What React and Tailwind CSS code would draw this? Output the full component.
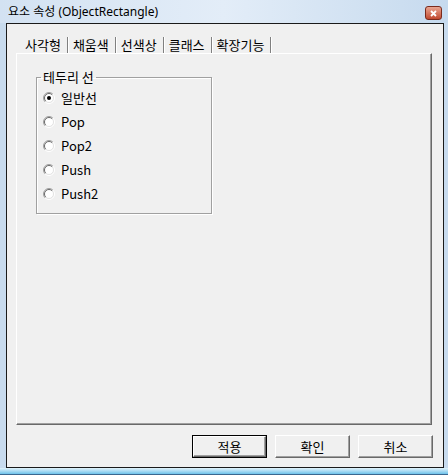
import React from 'react'

const tabs = ['사각형', '채움색', '선색상', '클래스', '확장기능']
const options = ['일반선', 'Pop', 'Pop2', 'Push', 'Push2']

function Radio({ checked }) {
  return (
    <svg width="12" height="12" viewBox="0 0 12 12" className="shrink-0">
      <circle cx="6" cy="6" r="4.5" fill="#ffffff" />
      <path d="M 2.1 9.9 A 5.5 5.5 0 0 1 9.9 2.1" fill="none" stroke="#a0a0a0" strokeWidth="1" />
      <path d="M 2.8 9.2 A 4.5 4.5 0 0 1 9.2 2.8" fill="none" stroke="#696969" strokeWidth="1" />
      <path d="M 9.9 2.1 A 5.5 5.5 0 0 1 2.1 9.9" fill="none" stroke="#ffffff" strokeWidth="1" />
      <path d="M 9.2 2.8 A 4.5 4.5 0 0 1 2.8 9.2" fill="none" stroke="#e3e3e3" strokeWidth="1" />
      {checked && <circle cx="6" cy="6" r="2" fill="#000000" />}
    </svg>
  )
}

function Button({ children, isDefault }) {
  return (
    <div className={'w-[75px] h-[23px] flex bg-[#f0f0f0] ' + (isDefault ? 'border border-black' : '')}>
      <div className="flex-1 flex items-center justify-center border border-t-white border-l-white border-r-[#696969] border-b-[#696969] shadow-[inset_-1px_-1px_0_#a0a0a0]">
        {children}
      </div>
    </div>
  )
}

export default function App() {
  return (
    <div className="w-[448px] h-[475px] flex flex-col bg-[#c8dbee] font-['Noto_Sans_CJK_KR',sans-serif] text-[13px] text-black overflow-hidden">
      {/* title bar */}
      <div className="h-[23px] flex items-center pl-[8px] pr-[6px] bg-gradient-to-r from-[#d3e2f2] via-[#e3edf8] to-[#c6daee]">
        <span className="font-['Noto_Sans','Noto_Sans_CJK_KR',sans-serif] text-[12px] leading-[14px] pt-[1px]">
          요소 속성 (ObjectRectangle)
        </span>
        <div className="ml-auto mt-[3px] w-[17px] h-[14px] rounded-[3px] border border-[#7a2a1c] bg-gradient-to-b from-[#e9a591] to-[#c0472d] flex items-center justify-center">
          <svg width="7" height="7" viewBox="0 0 7 7">
            <path d="M1 1 L6 6 M6 1 L1 6" stroke="#ffffff" strokeWidth="1.8" />
          </svg>
        </div>
      </div>

      {/* client */}
      <div className="flex-1 ml-[6px] mr-[4px] flex flex-col bg-[#f0f0f0] border border-[#1a1a1a] pl-[9px] pr-[10px] pt-[11px] pb-[9px]">
        <div className="h-[18px] flex items-end pl-[9px]">
          {tabs.map((t) => (
            <div key={t} className="flex items-end">
              <span className="leading-[16px] whitespace-nowrap">{t}</span>
              <div className="ml-[6px] mr-[4px] w-[2px] h-[16px] border-l border-l-[#808080] border-r border-r-white" />
            </div>
          ))}
        </div>

        <div className="h-[372px] mr-[1px] border border-t-white border-l-white border-r-[#696969] border-b-[#696969] shadow-[inset_-1px_-1px_0_#a0a0a0] pt-[16px] pl-[19px]">
          <fieldset className="w-[176px] h-[144px] border border-[#a0a0a0] shadow-[inset_1px_1px_0_#fff,1px_1px_0_#fff]">
            <legend className="ml-[4px] px-[2px] leading-[14px]">테두리 선</legend>
            <div className="flex flex-col pt-[2px] pl-[6px]">
              {options.map((o, i) => (
                <div key={o} className="h-[24px] flex items-center gap-[6px]">
                  <Radio checked={i === 0} />
                  <span className="leading-[14px]">{o}</span>
                </div>
              ))}
            </div>
          </fieldset>
        </div>

        <div className="mt-[10px] flex justify-end gap-[8px]">
          <Button isDefault>적용</Button>
          <Button>확인</Button>
          <Button>취소</Button>
        </div>
      </div>

      {/* bottom frame */}
      <div className="h-[7px] bg-gradient-to-b from-[#e2f3fb] to-[#6cc2ea] border-b border-[#3a6790]" />
    </div>
  )
}
